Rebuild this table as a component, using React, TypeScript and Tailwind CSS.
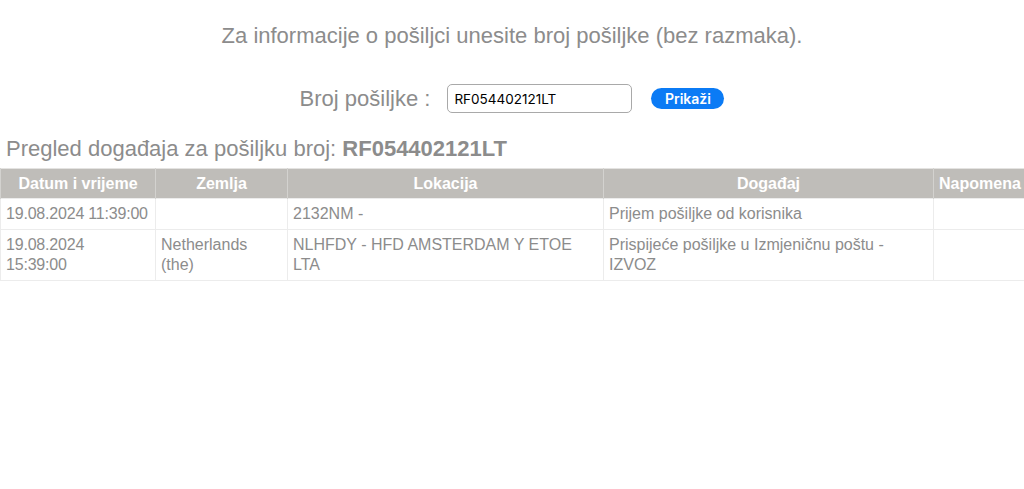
import React from "react";

const rows = [
  {
    date: ["19.08.2024 11:39:00"],
    country: "",
    location: "2132NM -",
    event: "Prijem pošiljke od korisnika",
    note: "",
  },
  {
    date: ["19.08.2024", "15:39:00"],
    country: "Netherlands (the)",
    location: "NLHFDY - HFD AMSTERDAM Y ETOE LTA",
    event: "Prispijeće pošiljke u Izmjeničnu poštu - IZVOZ",
    note: "",
  },
];

const columns = [
  { label: "Datum i vrijeme", w: "w-[155px]" },
  { label: "Zemlja", w: "w-[132px]" },
  { label: "Lokacija", w: "w-[316px]" },
  { label: "Događaj", w: "w-[330px]" },
  { label: "Napomena", w: "w-[91px]" },
];

const cell = "border border-[#ececec] px-[5px] py-[5px] align-top";

export default function App() {
  return (
    <div className="w-[1024px] h-[489px] bg-white font-['Liberation_Sans',Arial,sans-serif] text-[#8c8c8c]">
      <p className="pt-[23px] text-center text-[22px] leading-[26px]">
        Za informacije o pošiljci unesite broj pošiljke (bez razmaka).
      </p>

      <div className="mt-[35px] flex items-center justify-center">
        <span className="text-[22px] leading-[26px]">Broj pošiljke :</span>
        <input
          type="text"
          defaultValue="RF054402121LT"
          className="ml-[17px] w-[185px] h-[29px] rounded-[5px] border border-[#a9a9a9] px-[6px] text-[13.5px] text-black font-['Inter',sans-serif] outline-none"
        />
        <button className="ml-[19px] w-[73px] h-[21px] rounded-full bg-[#0b7bf5] text-white text-[14px] font-semibold font-['Inter',sans-serif] leading-none">
          Prikaži
        </button>
      </div>

      <h2 className="mt-[23px] pl-[6px] text-[22px] leading-[26px]">
        Pregled događaja za pošiljku broj: <b className="font-bold">RF054402121LT</b>
      </h2>

      <table className="mt-[6px] w-[1024px] table-fixed border-collapse text-[16px] leading-[20px]">
        <thead>
          <tr className="bg-[#bfbdb9] border-t border-[#e4e3e1]">
            {columns.map((c) => (
              <th
                key={c.label}
                className={`${c.w} h-[30px] border-x border-[#d3d2cf] px-[5px] text-center font-bold text-white`}
              >
                {c.label}
              </th>
            ))}
          </tr>
        </thead>
        <tbody>
          {rows.map((r, i) => (
            <tr key={i}>
              <td className={`${cell} whitespace-nowrap tracking-[-0.2px]`}>
                {r.date.map((line) => (
                  <div key={line}>{line}</div>
                ))}
              </td>
              <td className={cell}>{r.country}</td>
              <td className={cell}>{r.location}</td>
              <td className={cell}>{r.event}</td>
              <td className={cell}>{r.note}</td>
            </tr>
          ))}
        </tbody>
      </table>
    </div>
  );
}
